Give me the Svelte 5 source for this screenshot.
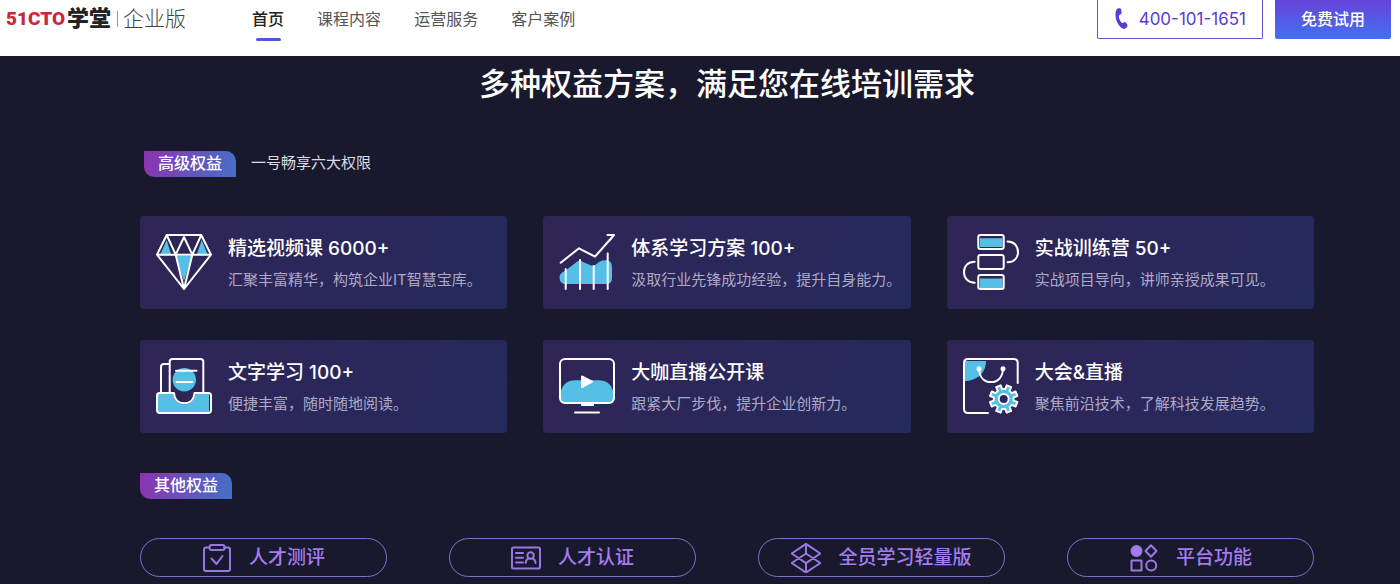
<script lang="ts">
  /**
   * App — enterprise landing page: header bar plus the benefits section.
   */
  interface Benefit {
    icon: string;
    title: string;
    text: string;
  }

  const navItems = ['首页', '课程内容', '运营服务', '客户案例'];
  let active = $state('首页');

  const benefits: Benefit[] = [
    { icon: 'diamond', title: '精选视频课 6000+', text: '汇聚丰富精华，构筑企业IT智慧宝库。' },
    { icon: 'chart', title: '体系学习方案 100+', text: '汲取行业先锋成功经验，提升自身能力。' },
    { icon: 'flow', title: '实战训练营 50+', text: '实战项目导向，讲师亲授成果可见。' },
    { icon: 'reading', title: '文字学习 100+', text: '便捷丰富，随时随地阅读。' },
    { icon: 'live', title: '大咖直播公开课', text: '跟紧大厂步伐，提升企业创新力。' },
    { icon: 'event', title: '大会&直播', text: '聚焦前沿技术，了解科技发展趋势。' },
  ];

  const extras = [
    { icon: 'assess', label: '人才测评' },
    { icon: 'certify', label: '人才认证' },
    { icon: 'layers', label: '全员学习轻量版' },
    { icon: 'platform', label: '平台功能' },
  ];

  // Closed gear outline: each tooth is a flat top between two valleys
  function gearPath(cx: number, cy: number, teeth: number, outer: number, inner: number) {
    const step = (Math.PI * 2) / teeth;
    const points: string[] = [];
    for (let i = 0; i < teeth; i++) {
      const mid = (i + 0.5) * step;
      for (const [offset, r] of [[-0.3, inner], [-0.22, outer], [0.22, outer], [0.3, inner]]) {
        const a = mid + offset * step;
        points.push(`${(cx + r * Math.cos(a)).toFixed(2)} ${(cy + r * Math.sin(a)).toFixed(2)}`);
      }
    }
    return `M${points.join('L')}Z`;
  }
</script>

<header class="topbar">
  <a class="logo" href="#home" aria-label="51CTO学堂企业版">
    <span class="logo-mark">51CTO</span>
    <span class="logo-name">学堂</span>
    <span class="logo-edition">企业版</span>
  </a>

  <nav class="nav">
    {#each navItems as item}
      <a href="#{item}" class:active={active === item} onclick={() => (active = item)}>{item}</a>
    {/each}
  </nav>

  <div class="actions">
    <a class="phone" href="tel:400-101-1651">
      <svg width="14" height="22" viewBox="0 0 14 22" aria-hidden="true">
        <path
          d="M1.800 1.200C2.500.4 4.500.1 5.500.4 6.300.6 6.800 4.500 6.500 5.500 6.200 6.300 4.200 6.600 4 7.500 3.600 9.800 5.200 13.600 7 15 7.800 15.500 9 13.900 9.900 14 10.900 14.200 12.700 16.600 12.600 17.600 12.500 18.800 10.400 21 9.200 21 5.500 20.700 .5 14 .5 7.500 .5 4.800 .8 2.300 1.800 1.200Z"
        />
      </svg>
      400-101-1651
    </a>
    <button class="trial" type="button">免费试用</button>
  </div>
</header>

<main class="content">
  <h1>多种权益方案，满足您在线培训需求</h1>

  <div class="section-head section-head--main">
    <h2 class="tag">高级权益</h2>
    <span class="note">一号畅享六大权限</span>
  </div>

  <div class="cards">
    {#each benefits as benefit}
      <article class="card">
        <svg class="card-icon" viewBox="0 0 56 56" aria-hidden="true">
          {#if benefit.icon === 'diamond'}
            <path class="fill" d="M10.700 6 15 20H4.500ZM45.700 6 51.500 20H41ZM19.500 22H36L28 47Z" />
            <path d="M10.700 1H45.300L55 20.700 28 55 1 20.700ZM1 20.700H55M10.700 1 19.700 20.700 28 55 36.300 20.700 45.300 1M19.700 20.700 28 3 36.300 20.700" />
          {:else if benefit.icon === 'chart'}
            <path class="fill" d="M6 37 17 28.500Q20 25.500 24 28L31 31Q34.500 32.500 37 30.500L40 28Q43 26 47 26.300 53 26.500 53 33V44Q53 50 47 50H7Q1 50 .5 44 .3 39 6 37Z" />
            <path d="M1.700 28.700 20 14.300 36 22.700 55 1H48.500M55 1 50 7M6.700 35V55M21 26V55M34.700 32V55M48.700 19.500V55" />
          {:else if benefit.icon === 'flow'}
            <path class="fill" d="M17 4.300H39.500V13H17ZM17 44.500H39.500V54H17Z" />
            <rect x="15.300" y="1" width="25.400" height="14" rx="2" />
            <rect x="15.300" y="21" width="25.400" height="14" rx="2" />
            <rect x="15.300" y="41" width="25.400" height="14" rx="2" />
            <path d="M44.500 7.500C51 7.500 55 12 55 18S51 28.300 44.500 28.300M11.700 27.700C5 27.700 1 32 1 38S5 48.700 11.700 48.700" />
          {:else if benefit.icon === 'reading'}
            <circle class="fill" cx="28.300" cy="21.700" r="11.700" />
            <path class="fill" d="M2 36H17.500C19 43 23 46.500 28.300 46.500S38 43 39.500 36H53V54H2Z" />
            <path d="M5 34V9Q5 6 8 6H13M13.700 34V3.500Q13.700 1 16.500 1H44.500Q47.300 1 47.300 3.500V34M20 12.700H40.500M20.500 24H36" />
            <path d="M3.500 35H18C18.500 41.500 22.500 45.300 28.300 45.300S38 41.500 38.500 35H52.500Q55 35 55 37.500V52Q55 55 52 55H4Q1 55 1 52V37.500Q1 35 3.500 35Z" />
          {:else if benefit.icon === 'live'}
            <path class="fill" d="M2 33C4 26 9 22.300 16 22.300H40C47 22.300 52 26 54 33V44H2Z" />
            <rect x="1" y="1" width="54" height="44" rx="5" />
            <path class="solid" d="M23 18.500V29L33 23.700ZM23 46H34V47H23Z" />
            <path d="M16 54.500H40" />
          {:else}
            <path class="fill" d="M1 3H23C23 15 14 23 1 23Z" />
            <path d="M54.700 25V5Q54.700 1 50.700 1H5Q1 1 1 5V51Q1 55 5 55H25M16 10.700C16.500 19 21 24 28 24S39.500 19 40 10.700" />
            <circle class="solid" cx="16" cy="10.700" r="1.500" />
            <circle class="solid" cx="40" cy="10.700" r="1.500" />
            <path class="fill gear" d={gearPath(40.7, 41, 8, 14, 10)} />
            <circle class="hub" cx="40.700" cy="41" r="5" />
          {/if}
        </svg>
        <div class="card-body">
          <h3>{benefit.title}</h3>
          <p>{benefit.text}</p>
        </div>
      </article>
    {/each}
  </div>

  <div class="section-head">
    <h2 class="tag">其他权益</h2>
  </div>

  <div class="pills">
    {#each extras as extra}
      <a class="pill" href="#{extra.icon}">
        <svg class="pill-icon" viewBox="0 0 30 30" aria-hidden="true">
          {#if extra.icon === 'assess'}
            <path d="M7.500 4.500H4Q2 4.500 2 6.500V26Q2 28 4 28H26Q28 28 28 26V6.500Q28 4.500 26 4.500H22.500M9.500 15.500 14.500 21 20.500 13" />
            <rect x="7.500" y="2" width="15" height="5" rx="2" />
          {:else if extra.icon === 'certify'}
            <rect x="1" y="4.500" width="28" height="21" rx="1.500" />
            <path d="M5 10H12M5 14.700H12M5 19.500H12M14.700 20C14.700 17 16.500 15.800 18 15.400M24.500 20C24.500 17 22.700 15.800 21.200 15.400" />
            <circle cx="19.600" cy="12.500" r="3.200" />
          {:else if extra.icon === 'layers'}
            <path d="M15 .8 29.300 10.500 15 20.200.7 10.500ZM15 10.500 29.300 20 15 29.500.7 20ZM15 .8V10.500M15 20.200V29.500" />
          {:else}
            <circle class="dot" cx="7.500" cy="8" r="5" />
            <path d="M22 2.200 27.500 8 22 13.800 16.500 8ZM2.500 17.500H12.500V27.500H2.500Z" />
            <circle cx="22.200" cy="22.500" r="5" />
          {/if}
        </svg>
        <span>{extra.label}</span>
      </a>
    {/each}
  </div>
</main>

<style>
  :global(body) {
    background: #19192d;
    font-family: Inter, 'Noto Sans CJK SC', 'Liberation Sans', sans-serif;
  }

  a {
    color: inherit;
    text-decoration: none;
  }

  h1,
  h2,
  h3,
  p {
    margin: 0;
  }

  /* Header */
  .topbar {
    display: flex;
    align-items: flex-start;
    height: 56px;
    box-sizing: border-box;
    padding: 0 9px 0 6px;
    background: #fff;
  }

  .logo {
    display: flex;
    align-items: center;
    height: 38px;
    white-space: nowrap;
  }

  .logo-mark {
    color: #c9283c;
    font: 900 19px/38px Roboto, sans-serif;
  }

  .logo-name {
    margin-left: 2px;
    color: #222;
    font-size: 22px;
    font-weight: 900;
    line-height: 34px;
    padding-bottom: 2px;
  }

  .logo-edition {
    margin-left: 6px;
    padding-left: 5px;
    border-left: 1px solid #999;
    color: #444;
    font-size: 21px;
    font-weight: 300;
    line-height: 16px;
  }

  .nav {
    display: flex;
    gap: 33px;
    margin-left: 66px;
  }

  .nav a {
    display: flex;
    flex-direction: column;
    align-items: center;
    height: 41px;
    color: #555;
    font-size: 16px;
    line-height: 38px;
    white-space: nowrap;
  }

  .nav a.active {
    color: #222;
    font-weight: 500;
  }

  .nav a.active::after {
    content: '';
    width: 25px;
    height: 3px;
    border-radius: 2px;
    background: #5157d6;
  }

  .actions {
    display: flex;
    gap: 12px;
    margin-left: auto;
  }

  .phone {
    display: flex;
    align-items: center;
    gap: 10px;
    height: 39px;
    box-sizing: border-box;
    padding: 0 16px 0 17px;
    border: 1px solid #6a4fd0;
    border-top: 0;
    border-radius: 0 0 2px 2px;
    color: #5b3bd6;
    font-size: 17px;
    line-height: 38px;
    white-space: nowrap;
  }

  .phone svg {
    fill: #5b3bd6;
  }

  .trial {
    width: 116px;
    height: 39px;
    padding: 0 0 4px;
    border: 0;
    border-radius: 0 0 2px 2px;
    background: linear-gradient(#6644d8, #436ff6);
    color: #fff;
    font: inherit;
    font-size: 16px;
    font-weight: 500;
  }

  /* Benefits */
  .content {
    padding: 6px 86px 7px 140px;
    color: #fff;
  }

  h1 {
    font-size: 31px;
    font-weight: 500;
    line-height: 44px;
    text-align: center;
  }

  .section-head {
    display: flex;
    align-items: center;
    gap: 15px;
    height: 26px;
    margin-top: 40px;
  }

  .section-head--main {
    margin-top: 45px;
    padding-left: 4px;
  }

  .tag {
    height: 26px;
    padding: 0 14px;
    border-radius: 0 10px 0 10px;
    background: linear-gradient(105deg, #8d33ae, #4470c8);
    font-size: 16px;
    font-weight: 500;
    line-height: 24px;
  }

  .note {
    color: #dcdce4;
    font-size: 15px;
    line-height: 22px;
    padding-bottom: 2px;
  }

  .cards {
    display: grid;
    grid-template-columns: repeat(3, minmax(0, 1fr));
    gap: 31px 36px;
    margin-top: 39px;
  }

  .card {
    display: flex;
    align-items: center;
    gap: 16px;
    height: 93px;
    box-sizing: border-box;
    padding: 0 16px 1px;
    border-radius: 4px;
    background: linear-gradient(110deg, #2f2555, #2b275a 50%, #24295c);
  }

  .card-icon {
    flex: none;
    width: 56px;
    height: 56px;
    fill: none;
    stroke: #fff;
    stroke-width: 2;
    stroke-linecap: round;
    stroke-linejoin: round;
  }

  .card-icon .fill {
    fill: #55bfe6;
    stroke: none;
  }

  .card-icon .solid {
    fill: #fff;
  }

  .card-icon .gear {
    stroke: #fff;
  }

  .card-icon .hub {
    fill: #2b275a;
  }

  .card-body {
    padding-top: 2px;
    white-space: nowrap;
  }

  h3 {
    font-size: 19px;
    font-weight: 500;
    line-height: 30px;
  }

  .card-body p {
    margin-top: 4px;
    color: #aeaac6;
    font-size: 15px;
    line-height: 24px;
  }

  /* Other benefits */
  .pills {
    display: grid;
    grid-template-columns: repeat(4, 1fr);
    gap: 62px;
    margin-top: 39px;
  }

  .pill {
    display: flex;
    align-items: center;
    justify-content: center;
    gap: 17px;
    height: 39px;
    box-sizing: border-box;
    border: 1px solid #8170cc;
    border-radius: 20px;
    color: #a47cf0;
    font-size: 19px;
    font-weight: 500;
    line-height: 36px;
    white-space: nowrap;
  }

  .pill-icon {
    flex: none;
    width: 30px;
    height: 30px;
    fill: none;
    stroke: #9a78e4;
    stroke-width: 2;
    stroke-linecap: round;
    stroke-linejoin: round;
  }

  .pill-icon .dot {
    fill: #a47cf0;
  }
</style>
